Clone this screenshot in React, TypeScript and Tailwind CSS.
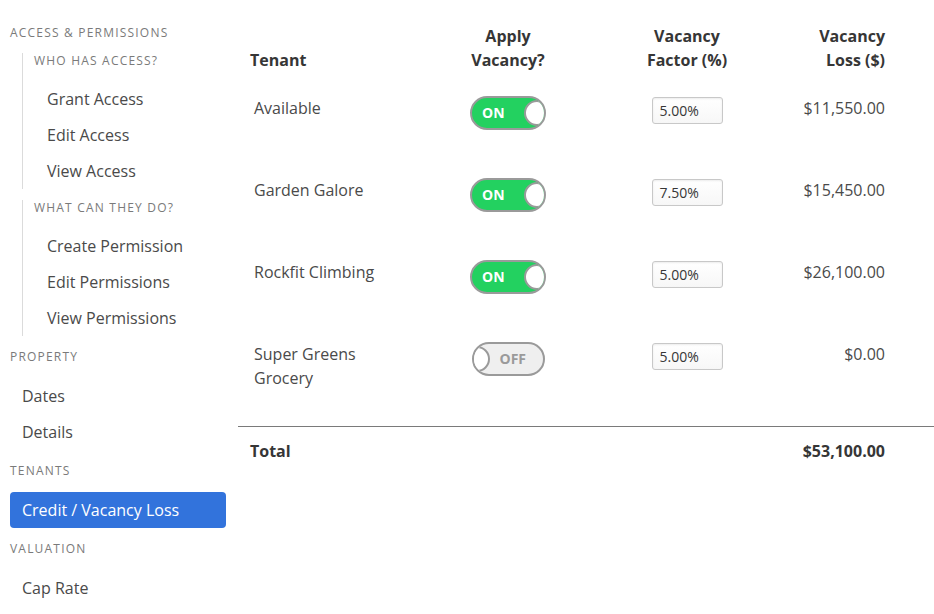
import React from 'react';

const font = { fontFamily: '"Open Sans", "Noto Sans", sans-serif' };

type Row = { name: string; on: boolean; factor: string; loss: string };

const rows: Row[] = [
  { name: 'Available', on: true, factor: '5.00%', loss: '$11,550.00' },
  { name: 'Garden Galore', on: true, factor: '7.50%', loss: '$15,450.00' },
  { name: 'Rockfit Climbing', on: true, factor: '5.00%', loss: '$26,100.00' },
  { name: 'Super Greens Grocery', on: false, factor: '5.00%', loss: '$0.00' },
];

function Label({ children }: { children: React.ReactNode }) {
  return (
    <div className="h-[42px] flex items-center text-[12px] uppercase tracking-[0.1em] text-[#7a7a7a]">
      {children}
    </div>
  );
}

function Item({ children, active }: { children: React.ReactNode; active?: boolean }) {
  return (
    <div
      className={
        active
          ? 'h-9 flex items-center px-3 rounded-sm bg-[#3273dc] text-white text-[16px]'
          : 'h-9 flex items-center px-3 text-[#4a4a4a] text-[16px]'
      }
    >
      {children}
    </div>
  );
}

function SubGroup({ title, items, className }: { title: string; items: string[]; className?: string }) {
  return (
    <div className={'ml-3 border-l border-[#dbdbdb] ' + (className ?? '')}>
      <div className="h-4 flex items-center pl-[11px] text-[12px] uppercase tracking-[0.1em] text-[#7a7a7a]">
        {title}
      </div>
      <div className="h-3" />
      {items.map((i) => (
        <div key={i} className="h-9 flex items-center pl-6 text-[16px] text-[#4a4a4a]">
          {i}
        </div>
      ))}
    </div>
  );
}

function Toggle({ on }: { on: boolean }) {
  return on ? (
    <div className="w-[76px] h-[34px] rounded-full border-2 border-[#9a9a9a] bg-[#23d160] flex items-center justify-between pl-[10px] overflow-hidden">
      <span className="text-white text-[14px] font-bold">ON</span>
      <span className="w-[26px] h-[26px] shrink-0 -mr-[6px] rounded-full bg-white border-2 border-[#9a9a9a]" />
    </div>
  ) : (
    <div className="w-[73px] h-[34px] rounded-full border-2 border-[#9a9a9a] bg-[#efefef] flex items-center overflow-hidden">
      <span className="w-[26px] h-[26px] shrink-0 -ml-[10px] rounded-full bg-white border-2 border-[#9a9a9a]" />
      <span className="ml-[10px] text-[#9a9a9a] text-[14px] font-bold">OFF</span>
    </div>
  );
}

export default function App() {
  return (
    <div className="w-[934px] h-[614px] bg-white flex overflow-hidden" style={font}>
      {/* Sidebar */}
      <div className="w-[238px] shrink-0 pl-2.5 pr-3 pt-3">
        <Label>Access &amp; Permissions</Label>
        <SubGroup title="Who has access?" items={['Grant Access', 'Edit Access', 'View Access']} className="-mt-px" />
        <SubGroup
          title="What can they do?"
          items={['Create Permission', 'Edit Permissions', 'View Permissions']}
          className="mt-[11px]"
        />
        <Label>Property</Label>
        <Item>Dates</Item>
        <Item>Details</Item>
        <Label>Tenants</Label>
        <Item active>Credit / Vacancy Loss</Item>
        <Label>Valuation</Label>
        <Item>Cap Rate</Item>
      </div>

      {/* Main */}
      <div className="flex-1 pt-6">
        <div className="grid grid-cols-[200px_140px_218px_101px] pb-3 text-[16px] font-bold leading-6 text-[#363636] items-end">
          <div className="pl-3">Tenant</div>
          <div className="text-center">
            Apply
            <br />
            Vacancy?
          </div>
          <div className="text-center">
            Vacancy
            <br />
            Factor (%)
          </div>
          <div className="text-right pr-3">
            Vacancy
            <br />
            Loss ($)
          </div>
        </div>

        {rows.map((r) => (
          <div key={r.name} className="grid grid-cols-[200px_140px_218px_101px] pt-3 pb-9 text-[16px] leading-6 text-[#4a4a4a] items-start">
            <div className="pl-4 pr-[40px]">{r.name}</div>
            <div className="flex justify-center">
              <Toggle on={r.on} />
            </div>
            <div className="flex justify-center pt-px">
              <div className="w-[71px] h-[27px] rounded-[3px] border border-[#c8c8c8] bg-gradient-to-b from-white to-[#f7f7f7] shadow-[inset_0_1px_2px_rgba(10,10,10,0.08)] flex items-center pl-[7px] text-[14px] text-[#363636]">
                {r.factor}
              </div>
            </div>
            <div className="text-right pr-3">{r.loss}</div>
          </div>
        ))}

        <div className="border-t border-[#7a7a7a]" />
        <div className="grid grid-cols-[200px_140px_218px_101px] pt-3 text-[16px] font-bold leading-6 text-[#363636]">
          <div className="pl-3">Total</div>
          <div />
          <div />
          <div className="text-right pr-3">$53,100.00</div>
        </div>
      </div>
    </div>
  );
}
